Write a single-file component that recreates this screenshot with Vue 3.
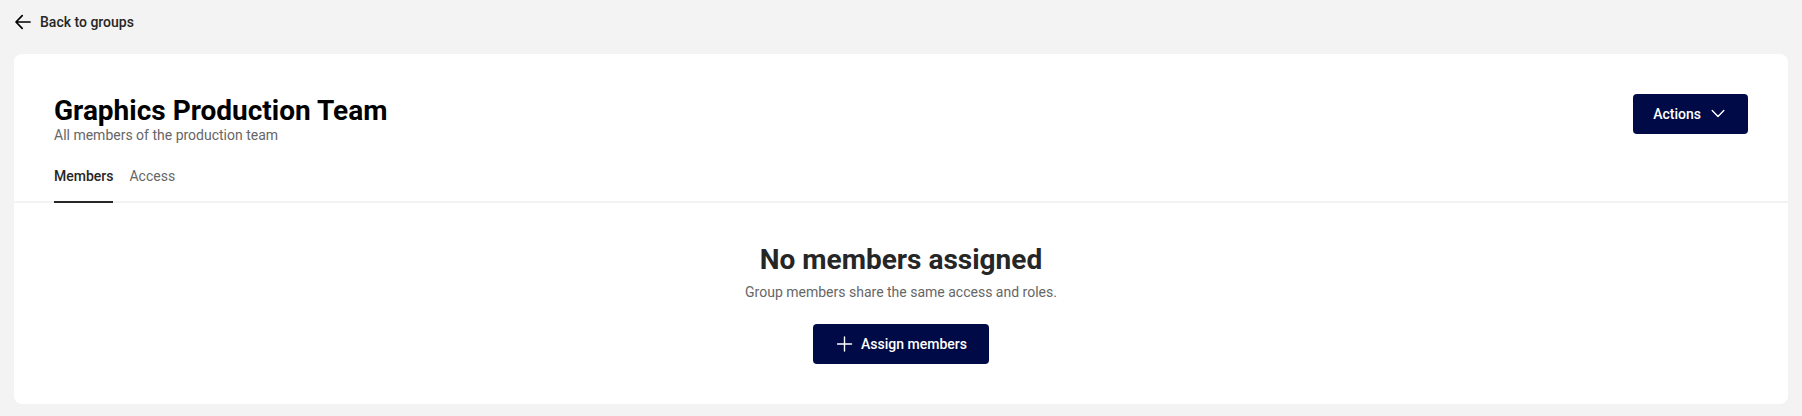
<script setup>
import { ref } from 'vue'

const tabs = ['Members', 'Access']
const active = ref('Members')
</script>

<template>
  <div class="page">
    <a class="back" href="#">
      <svg class="arrow" width="18" height="16" viewBox="0 0 18 16" aria-hidden="true">
        <path d="M16 8H2.2M8.2 1.7L2 8L8.2 14.3" />
      </svg>
      <span>Back to groups</span>
    </a>
    <main class="card">
      <header class="head">
        <div>
          <h1>Graphics Production Team</h1>
          <p class="sub">All members of the production team</p>
        </div>
        <button type="button" class="btn actions">
          <span>Actions</span>
          <svg width="14" height="10" viewBox="0 0 14 10" aria-hidden="true">
            <path d="M1.2 1.5L7 7.5L12.8 1.5" />
          </svg>
        </button>
      </header>
      <nav class="tabs">
        <button
          v-for="tab in tabs"
          :key="tab"
          type="button"
          class="tab"
          :class="{ active: tab === active }"
          @click="active = tab"
        >{{ tab }}</button>
      </nav>
      <section class="empty">
        <h2>No members assigned</h2>
        <p>Group members share the same access and roles.</p>
        <button type="button" class="btn assign">
          <svg width="16" height="16" viewBox="0 0 16 16" aria-hidden="true">
            <path d="M7.5 1V15M0.5 8H14.5" />
          </svg>
          <span>Assign members</span>
        </button>
      </section>
    </main>
  </div>
</template>

<style>
body {
  margin: 0;
  background: #f3f3f3;
}
</style>

<style scoped>
.page {
  padding: 12px 14px;
  font-family: Roboto, "Liberation Sans", sans-serif;
  font-size: 14px;
  line-height: 20px;
  color: #262626;
}
h1, h2, p {
  margin: 0;
}
svg {
  display: block;
  fill: none;
  stroke: currentColor;
  stroke-width: 1.4;
  stroke-linecap: round;
  stroke-linejoin: round;
}
button {
  font: inherit;
  border: 0;
  cursor: pointer;
}
.back {
  display: inline-flex;
  align-items: center;
  gap: 8px;
  color: #262626;
  font-weight: 500;
  text-decoration: none;
  vertical-align: top;
}
.arrow {
  color: #000;
  stroke-width: 1.7;
}
.card {
  margin-top: 22px;
  background: #fff;
  border-radius: 8px;
}
.head {
  display: flex;
  justify-content: space-between;
  align-items: flex-start;
  padding: 40px 40px 0;
}
h1, h2 {
  font-size: 28px;
  line-height: 34px;
  font-weight: 700;
}
h1 {
  color: #000;
}
p {
  color: #666;
  line-height: 14px;
}
.btn {
  display: flex;
  align-items: center;
  height: 40px;
  background: #000a46;
  color: #fff;
  border-radius: 4px;
  font-weight: 500;
}
.actions {
  padding: 0 23px 0 20px;
  gap: 10px;
}
.tabs {
  display: flex;
  gap: 16px;
  margin-top: 14px;
  padding: 0 40px;
  border-bottom: 2px solid #f3f3f3;
}
.tab {
  padding: 10px 0 15px;
  margin-bottom: -2px;
  background: none;
  color: #666;
  border-bottom: 2px solid transparent;
}
.tab.active {
  color: #262626;
  font-weight: 500;
  border-bottom-color: #262626;
}
.empty {
  display: flex;
  flex-direction: column;
  align-items: center;
  padding: 40px;
}
.empty p {
  margin: 8px 0 25px;
}
.assign {
  padding: 0 22px 0 24px;
  gap: 8px;
}
</style>
